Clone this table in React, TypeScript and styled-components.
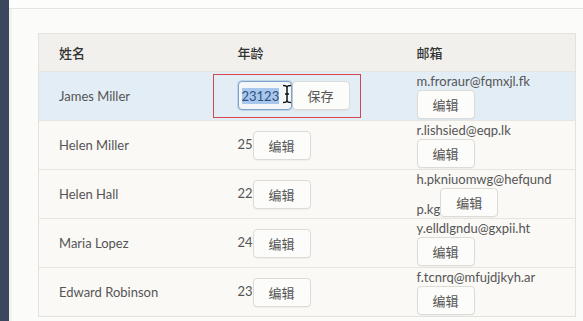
import React from 'react'
import styled, { createGlobalStyle } from 'styled-components'

type Person = {
  name: string
  age: number
  email: string
}

const people: Person[] = [
  { name: 'James Miller', age: 23123, email: 'm.froraur@fqmxjl.fk' },
  { name: 'Helen Miller', age: 25, email: 'r.lishsied@eqp.lk' },
  { name: 'Helen Hall', age: 22, email: 'h.pkniuomwg@hefqundp.kg' },
  { name: 'Maria Lopez', age: 24, email: 'y.elldlgndu@gxpii.ht' },
  { name: 'Edward Robinson', age: 23, email: 'f.tcnrq@mfujdjkyh.ar' },
]

const GlobalStyle = createGlobalStyle`
  html, body {
    margin: 0;
    padding: 0;
    background: #f6f6f3;
    font-family: Lato, 'Noto Sans CJK SC', sans-serif;
    overflow: hidden;
  }
`

const StyledShell = styled.div`
  display: flex;
  width: 583px;
  height: 321px;
`

const StyledSidebar = styled.div`
  width: 9px;
  flex-shrink: 0;
  background: #3b475c;
`

const StyledMain = styled.div`
  flex: 1;
  display: flex;
  flex-direction: column;
  min-width: 0;
`

const StyledTopBar = styled.div`
  height: 8px;
  background: #fdfdfc;
  border-bottom: 1px solid #e4e4e1;
  box-shadow: 0 1px 2px rgba(0, 0, 0, 0.06);
`

const StyledContent = styled.div`
  flex: 1;
  padding-left: 3px;
  background: #f1f1ee;
`

const StyledPanel = styled.div`
  height: 100%;
  padding: 24px 0 0 26px;
  background: #fbfbf9;
`

const StyledTable = styled.table`
  width: 538px;
  table-layout: fixed;
  border-collapse: collapse;
  border: 1px solid #e3e2dd;
  background: #faf9f6;
  font-size: 13px;
  color: #555;
`

const StyledHeadCell = styled.th`
  height: 37px;
  padding: 0 20px;
  text-align: left;
  font-weight: 500;
  font-size: 13px;
  color: #333;
  background: #f1f0ec;
`

const StyledRow = styled.tr<{ $active?: boolean }>`
  height: 48px;
  border-top: 1px solid #e6e5e0;
  background: ${(p) => (p.$active ? '#e3edf6' : '#faf9f6')};
`

const StyledCell = styled.td`
  padding: 0 20px;
  vertical-align: middle;
`

const StyledEmailCell = styled.td`
  padding: 1px 20px 1px;
  line-height: 16px;
  word-break: break-all;
  vertical-align: middle;
`

const StyledButton = styled.button`
  display: inline-block;
  vertical-align: middle;
  height: 29px;
  padding: 0 15px;
  margin: 0;
  font-family: 'Noto Sans CJK SC', sans-serif;
  font-size: 13px;
  color: #555;
  background: #fcfcfa;
  border: 1px solid #dcdbd6;
  border-radius: 4px;
  box-shadow: 0 1px 1px rgba(0, 0, 0, 0.04);
`

const StyledEmailButton = styled(StyledButton)`
  vertical-align: bottom;
  margin-top: 1px;
`

const StyledEditForm = styled.div`
  display: inline-flex;
  align-items: center;
  margin-left: -25px;
  padding: 6px 10px 7px 24px;
  border: 1px solid #d8454e;
`

const StyledInput = styled.div`
  position: relative;
  display: flex;
  align-items: center;
  width: 49px;
  height: 27px;
  padding-left: 3px;
  border: 1px solid #7da2cc;
  border-radius: 4px;
  background: #f4f7fa;
  box-shadow: 0 0 0 1px rgba(125, 162, 204, 0.35);
  font-size: 13px;
`

const StyledSelection = styled.span`
  background: #a9c6ec;
  color: #2f5282;
  line-height: 16px;
`

const StyledCursor = styled.svg`
  position: absolute;
  left: 43px;
  top: 2px;
`

const AgeEditor = ({ value }: { value: number }) => (
  <StyledEditForm>
    <StyledInput>
      <StyledSelection>{value}</StyledSelection>
      <StyledCursor width="10" height="20" viewBox="0 0 10 20">
        <path d="M1 1.5 C3 1.5 5 2 5 3.5 L5 16.5 C5 18 3 18.5 1 18.5 M9 1.5 C7 1.5 5 2 5 3.5 M5 16.5 C5 18 7 18.5 9 18.5 M3 10 L7 10" stroke="#fff" strokeWidth="3.2" fill="none" />
        <path d="M1 1.5 C3 1.5 5 2 5 3.5 L5 16.5 C5 18 3 18.5 1 18.5 M9 1.5 C7 1.5 5 2 5 3.5 M5 16.5 C5 18 7 18.5 9 18.5 M3 10 L7 10" stroke="#111" strokeWidth="1.5" fill="none" />
      </StyledCursor>
    </StyledInput>
    <StyledButton>保存</StyledButton>
  </StyledEditForm>
)

export default function App() {
  return (
    <StyledShell>
      <GlobalStyle />
      <StyledSidebar />
      <StyledMain>
        <StyledTopBar />
        <StyledContent>
          <StyledPanel>
            <StyledTable>
              <thead>
                <tr>
                  <StyledHeadCell>姓名</StyledHeadCell>
                  <StyledHeadCell>年龄</StyledHeadCell>
                  <StyledHeadCell>邮箱</StyledHeadCell>
                </tr>
              </thead>
              <tbody>
                {people.map((p, i) => (
                  <StyledRow key={p.name} $active={i === 0}>
                    <StyledCell>{p.name}</StyledCell>
                    <StyledCell>
                      {i === 0 ? (
                        <AgeEditor value={p.age} />
                      ) : (
                        <>
                          {p.age}<StyledButton>编辑</StyledButton>
                        </>
                      )}
                    </StyledCell>
                    <StyledEmailCell>
                      {p.email}<StyledEmailButton>编辑</StyledEmailButton>
                    </StyledEmailCell>
                  </StyledRow>
                ))}
              </tbody>
            </StyledTable>
          </StyledPanel>
        </StyledContent>
      </StyledMain>
    </StyledShell>
  )
}
